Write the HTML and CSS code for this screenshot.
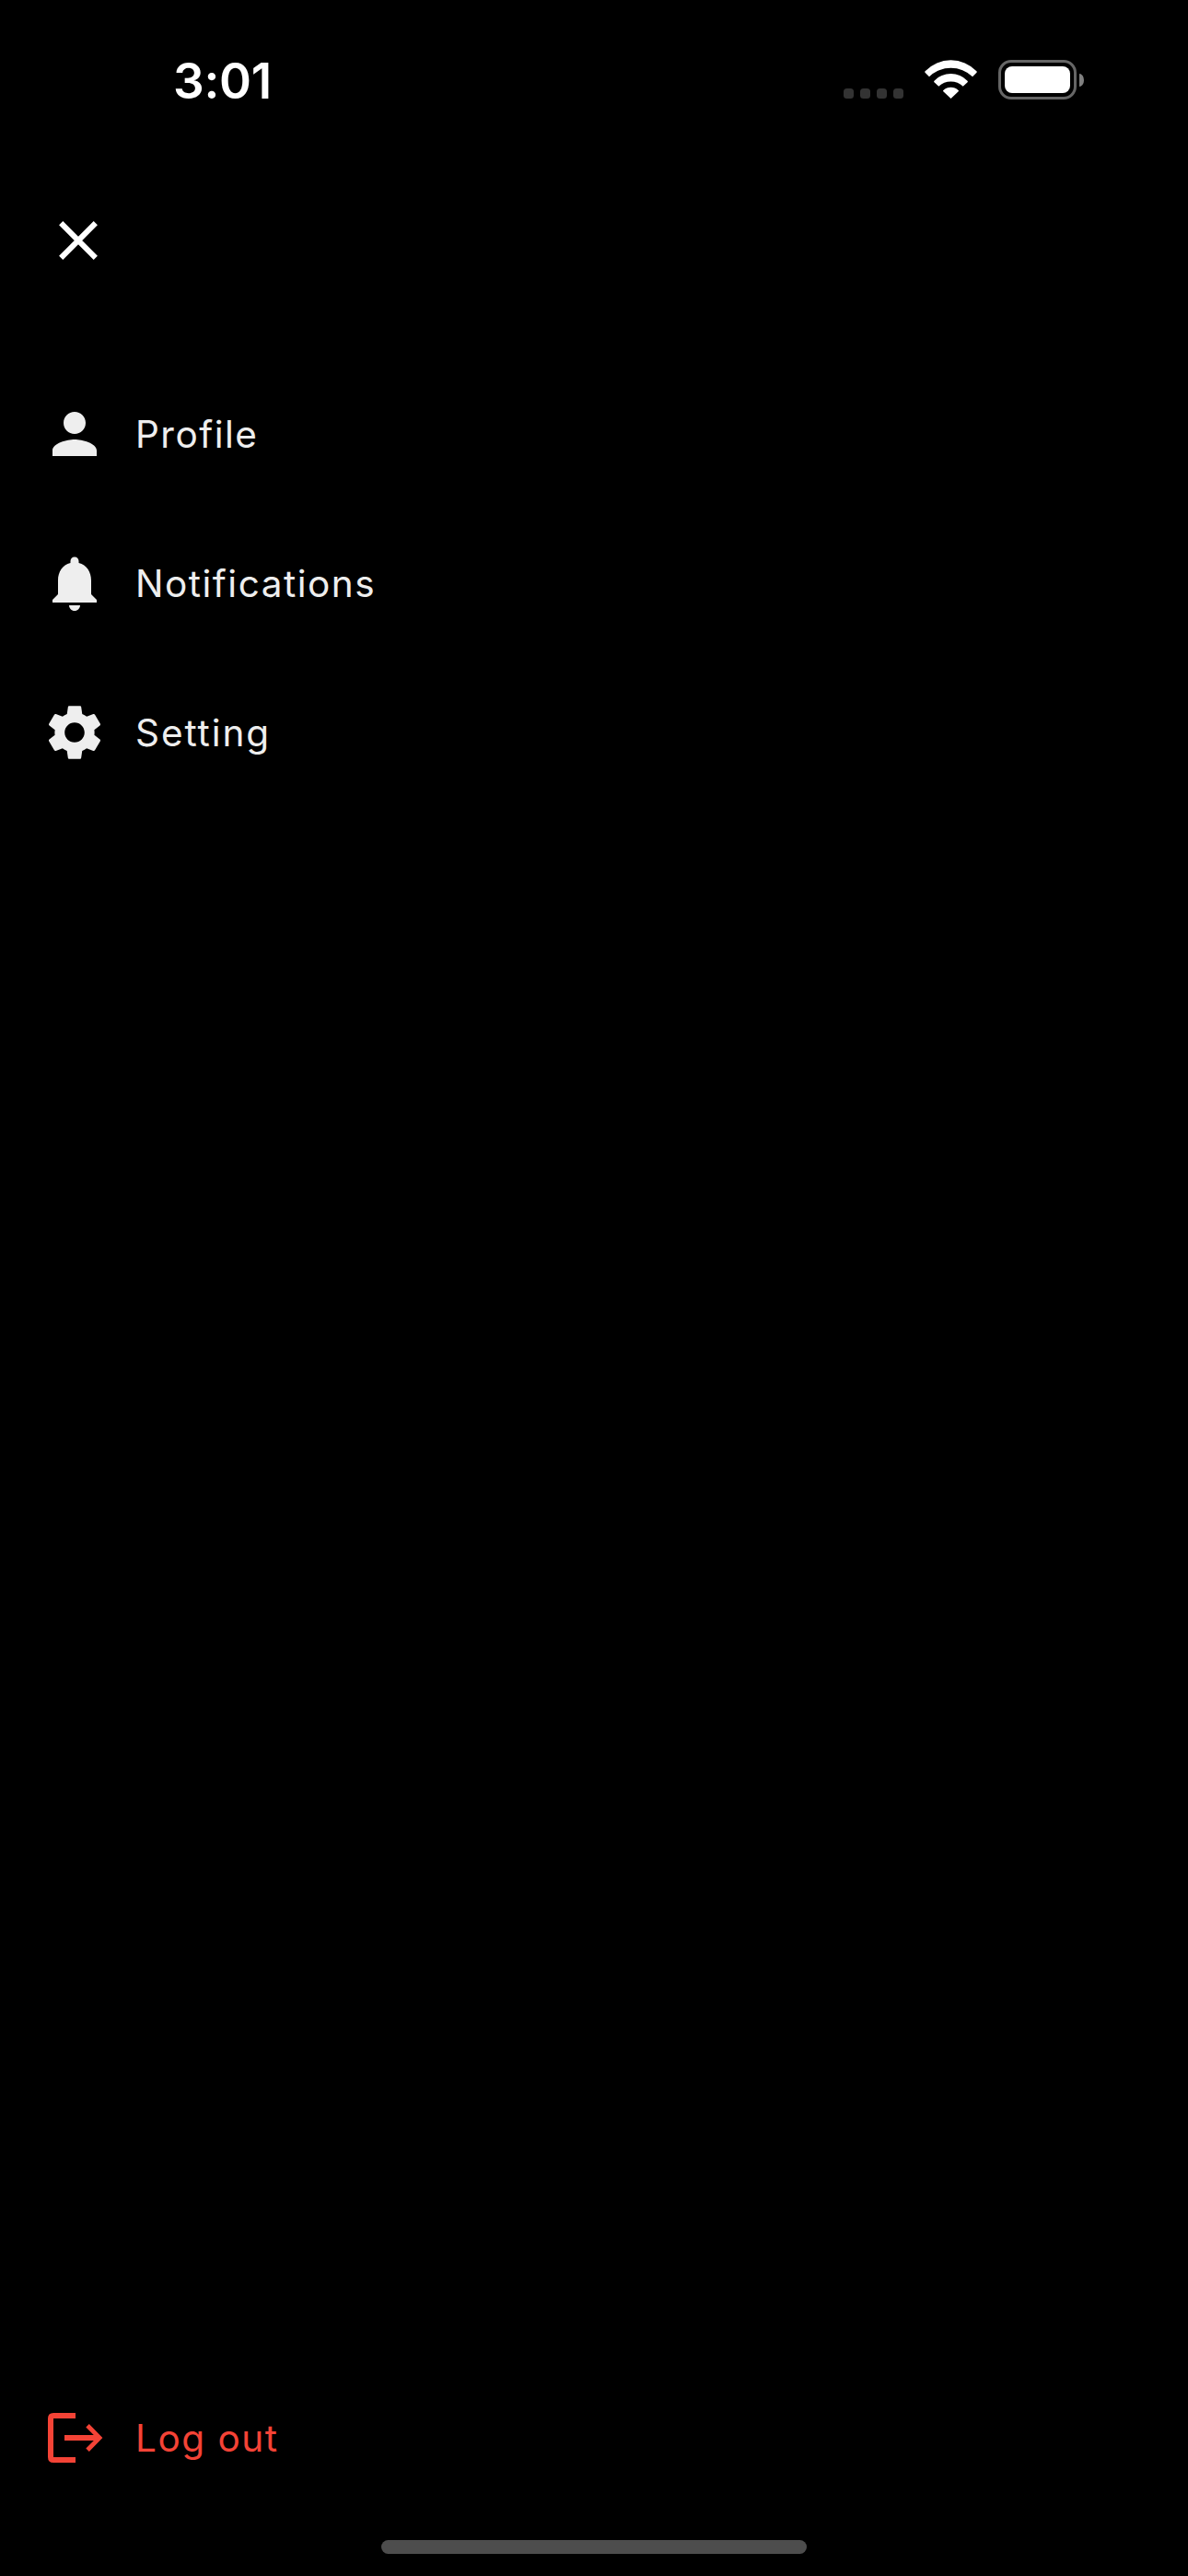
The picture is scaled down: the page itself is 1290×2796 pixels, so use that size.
FILE: index.html
```html
<!DOCTYPE html>
<html lang="en">
<head>
<meta charset="utf-8">
<title>Menu</title>
<link rel="stylesheet" href="styles.css">
</head>
<body>
<div class="screen">
  <header class="status-bar">
    <span class="time">3:01</span>
    <div class="status-icons">
      <div class="signal"><i></i><i></i><i></i><i></i></div>
      <svg class="wifi" viewBox="0 0 57 42">
        <path d="M.6 12.3A38.5 38.5 0 0 1 56.4 12.3Q57.2 13 56.5 13.8L52 18.3A34 34 0 0 0 5 18.3L.5 13.8Q-.2 13 .6 12.3Z"/>
        <path d="M10.5 22.7A25 25 0 0 1 46.5 22.7Q47.3 23.4 46.6 24.2L41.7 28.8A19 19 0 0 0 15.3 28.8L10.4 24.2Q9.7 23.4 10.5 22.7Z"/>
        <path d="M20.4 33A12 12 0 0 1 36.6 33Q37.4 33.6 36.7 34.3L28.5 42L20.3 34.3Q19.6 33.6 20.4 33Z"/>
      </svg>
      <div class="battery">
        <div class="battery-shell"><div class="battery-level"></div></div>
        <div class="battery-cap"></div>
      </div>
    </div>
  </header>

  <button class="close" aria-label="Close">
    <svg viewBox="0 0 42 42"><path d="M2.2 2.2L39.8 39.8M39.8 2.2L2.2 39.8"/></svg>
  </button>

  <nav class="menu">
    <a class="item">
      <svg class="icon" viewBox="0 0 24 24"><path d="M12 12c2.21 0 4-1.79 4-4s-1.79-4-4-4-4 1.79-4 4 1.79 4 4 4zm0 2c-2.67 0-8 1.34-8 4v2h16v-2c0-2.66-5.33-4-8-4z"/></svg>
      <span class="label">Profile</span>
    </a>
    <a class="item">
      <svg class="icon" viewBox="0 0 24 24"><path d="M12 22c1.1 0 2-.9 2-2h-4c0 1.1.89 2 2 2zm6-6v-5c0-3.07-1.64-5.64-4.5-6.32V4c0-.83-.67-1.5-1.5-1.5s-1.5.67-1.5 1.5v.68C7.63 5.36 6 7.92 6 11v5l-2 2v1h16v-1l-2-2z"/></svg>
      <span class="label">Notifications</span>
    </a>
    <a class="item">
      <svg class="icon" viewBox="0 0 24 24"><path d="M19.14 12.94c.04-.3.06-.61.06-.94 0-.32-.02-.64-.07-.94l2.03-1.58c.18-.14.23-.41.12-.61l-1.92-3.32c-.12-.22-.37-.29-.59-.22l-2.39.96c-.5-.38-1.03-.7-1.62-.94L14.4 2.81c-.04-.24-.24-.41-.48-.41h-3.84c-.24 0-.43.17-.47.41L9.25 5.35C8.66 5.59 8.12 5.92 7.63 6.29L5.24 5.33c-.22-.08-.47 0-.59.22L2.74 8.87c-.12.21-.08.47.12.61l2.03 1.58c-.05.3-.09.63-.09.94s.02.64.07.94l-2.03 1.58c-.18.14-.23.41-.12.61l1.92 3.32c.12.22.37.29.59.22l2.39-.96c.5.38 1.03.7 1.62.94l.36 2.54c.05.24.24.41.48.41h3.84c.24 0 .44-.17.47-.41l.36-2.54c.59-.24 1.13-.56 1.62-.94l2.39.96c.22.08.47 0 .59-.22l1.92-3.32c.12-.22.07-.47-.12-.61l-2.01-1.58zM12 15.6c-1.98 0-3.6-1.62-3.6-3.6s1.62-3.6 3.6-3.6 3.6 1.62 3.6 3.6-1.62 3.6-3.6 3.6z"/></svg>
      <span class="label label-wide">Setting</span>
    </a>
  </nav>

  <a class="item logout">
    <svg class="icon" viewBox="0 0 72 72"><path d="M37 9H13Q7 9 7 15V57Q7 63 13 63H37V57H13V15H37ZM25 33H56.8L48.3 24.6L51.8 21.1L66.4 36L51.8 50.9L48.3 47.4L56.8 39H25Z"/></svg>
    <span class="label">Log out</span>
  </a>
  <div class="home-indicator"></div>
</div>
</body>
</html>
```
FILE: styles.css
```css
* { box-sizing: border-box; }

body {
  margin: 0;
  background: #000;
  font-family: Inter, "Liberation Sans", sans-serif;
}

.screen {
  display: flex;
  flex-direction: column;
  width: 1290px;
  height: 2796px;
  background: #000;
  color: #eee;
}

.status-bar {
  display: flex;
  justify-content: space-between;
  height: 177px;
  padding: 56px 113px 0 188px;
}

.time {
  height: 64px;
  line-height: 64px;
  font-size: 53px;
  font-weight: 600;
  letter-spacing: -0.3px;
  color: #fff;
}

.status-icons {
  display: flex;
  align-items: flex-start;
  padding-top: 9px;
}

.signal {
  display: flex;
  gap: 7px;
  margin: 31px 23px 0 0;
}

.signal i {
  width: 11px;
  height: 11px;
  border-radius: 3.5px;
  background: #333;
}

.wifi {
  width: 57px;
  height: 42px;
  margin-right: 23px;
  fill: #fff;
}

.battery {
  display: flex;
  align-items: center;
  gap: 3px;
}

.battery-shell {
  width: 85px;
  height: 43px;
  padding: 4px;
  border: 3px solid #666;
  border-radius: 14px;
}

.battery-level {
  height: 29px;
  border-radius: 8px;
  background: #fff;
}

.battery-cap {
  width: 5px;
  height: 14px;
  border-radius: 0 5px 5px 0 / 0 7px 7px 0;
  background: #808080;
}

.close {
  display: flex;
  align-items: center;
  justify-content: center;
  width: 72px;
  height: 72px;
  margin: 48px 0 0 49px;
  padding: 0;
  border: 0;
  background: none;
}

.close svg {
  width: 42px;
  height: 42px;
  fill: none;
  stroke: #fff;
  stroke-width: 6px;
}

.menu {
  display: flex;
  flex-direction: column;
  gap: 90px;
  margin-top: 138px;
}

.item {
  display: flex;
  align-items: center;
  gap: 30px;
  height: 72px;
  padding-left: 45px;
}

.icon {
  width: 72px;
  height: 72px;
  fill: currentColor;
}

.label {
  font-size: 40.5px;
  line-height: 73px;
  letter-spacing: 1.5px;
  white-space: nowrap;
}

.label-wide {
  letter-spacing: 1.9px;
}

.logout {
  margin-top: auto;
  color: #f44336;
}

.home-indicator {
  width: 462px;
  height: 15px;
  margin: 75px auto 24px;
  border-radius: 7.5px;
  background: #4d4d4d;
}
```
